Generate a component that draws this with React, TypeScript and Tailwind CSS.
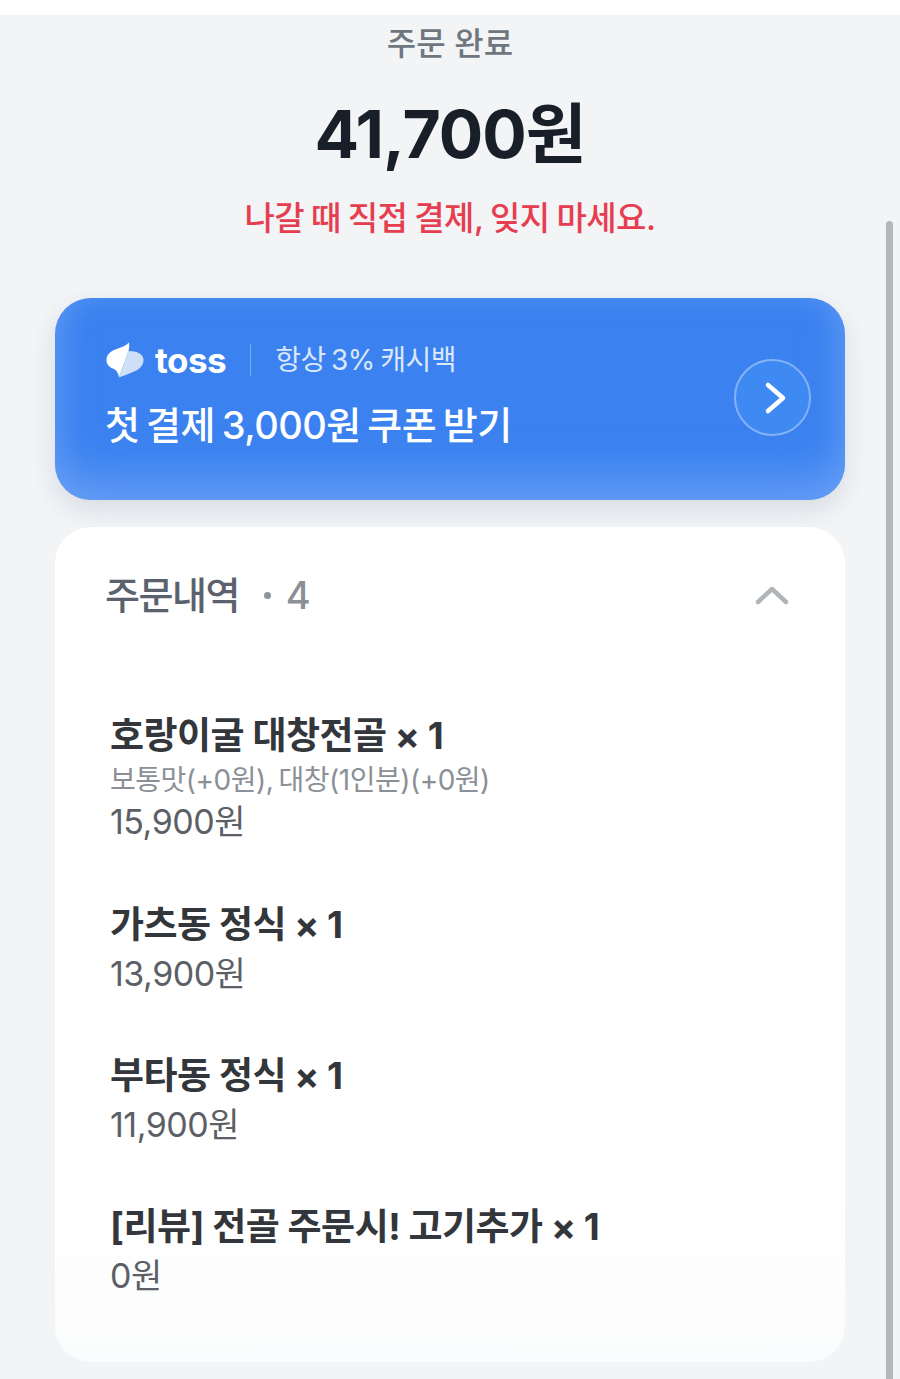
const font = "font-['Inter','Noto_Sans_CJK_KR',sans-serif]";

const items = [
  { name: "호랑이굴 대창전골 × 1", option: "보통맛(+0원), 대창(1인분)(+0원)", price: "15,900원" },
  { name: "가츠동 정식 × 1", price: "13,900원" },
  { name: "부타동 정식 × 1", price: "11,900원" },
  { name: "[리뷰] 전골 주문시! 고기추가 × 1", price: "0원" },
];

const TossLogo = () => (
  <svg width="38" height="36" viewBox="0 0 38 36" fill="none">
    <path d="M23 0.5C23.5 4 23 7 22.5 9L13 35.5C12 30 10 28 8 27C3 25.500 0.500 22 0.500 18C0.500 11 7 8 12 6.500C17 5 20 3.500 23 0.500Z" fill="#ffffff" />
    <path d="M22.500 9C31 9 37.500 12 37.500 18C37.500 24 33 27.500 27 30C22 32 17 34 13 35.500Z" fill="#cfdff8" />
  </svg>
);

export default function App() {
  return (
    <div className={`${font} relative h-[1379px] overflow-hidden bg-white`}>
      <div className="mt-[15px] h-[1364px] bg-[#f2f4f6] px-[55px]">
        <h1 className="pt-[8px] text-center text-[32px] leading-[42px] font-medium text-[#6f767e]">주문 완료</h1>
        <div className="mt-[25px] text-center text-[66px] leading-[88px] font-bold tracking-[-1px] text-[#191f28]">41,700원</div>
        <p className="mt-[17px] text-center text-[33px] leading-[46px] font-medium tracking-[-0.5px] [word-spacing:-1.5px] text-[#e63e50]">나갈 때 직접 결제, 잊지 마세요.</p>

        {/* TOSS BANNER */}
        <div className="mt-[57px] flex h-[202px] items-center justify-between rounded-[36px] bg-[#3b82f0] pr-[34px] pl-[51px] shadow-[0_10px_24px_rgba(60,80,120,0.14),inset_0_-24px_40px_rgba(130,178,250,0.5),inset_0_0_30px_rgba(120,170,250,0.25)]">
          <div className="pb-[9px]">
            <div className="flex items-center">
              <TossLogo />
              <span className="ml-[11px] text-[35px] leading-[40px] font-bold tracking-[-0.5px] text-white">toss</span>
              <span className="mr-[24px] ml-[24px] h-[32px] w-px bg-[#7fabf2]" />
              <span className="text-[28px] leading-[38px] tracking-[-0.5px] [word-spacing:-2px] text-[#dbe7fb]">항상 3% 캐시백</span>
            </div>
            <div className="mt-[20px] -ml-px text-[38px] leading-[50px] font-medium tracking-[-0.5px] [word-spacing:-3px] text-white">첫 결제 3,000원 쿠폰 받기</div>
          </div>
          <div className="mb-[3px] flex h-[77px] w-[77px] items-center justify-center rounded-full border-2 border-[#83b1f6] bg-[#3f8af2]">
            <svg width="24" height="34" viewBox="0 0 24 34" fill="none" className="ml-[4px]">
              <path d="M5 4L20 17L5 30" stroke="#ffffff" strokeWidth="4.500" strokeLinecap="round" strokeLinejoin="round" />
            </svg>
          </div>
        </div>

        {/* ORDER LIST */}
        <div className="mt-[27px] h-[835px] rounded-[36px] bg-linear-to-b from-white from-80% to-[#fbfcfd] pt-[42px] pr-[55px] pl-[50px]">
          <div className="flex items-center justify-between">
            <div className="flex items-center">
              <span className="text-[38px] leading-[52px] font-medium tracking-[-1.5px] text-[#5b626d]">주문내역</span>
              <span className="mr-[15px] ml-[25px] h-[7px] w-[7px] rounded-full bg-[#8b95a1]" />
              <span className="text-[38px] leading-[52px] font-medium text-[#8b9096]">4</span>
            </div>
            <svg width="36" height="24" viewBox="0 0 36 24" fill="none">
              <path d="M4 19L18 6L32 19" stroke="#b0b5ba" strokeWidth="4.500" strokeLinecap="round" strokeLinejoin="round" />
            </svg>
          </div>
          <div className="mt-[90px] flex flex-col gap-[54px] pl-[5px]">
            {items.map((item) => (
              <div key={item.name} className={item.option ? "mb-px" : ""}>
                <div className="text-[37px] leading-[50px] font-bold tracking-[-0.5px] text-[#33363b]">{item.name}</div>
                {item.option ? (
                  <div className="text-[28px] leading-[38px] tracking-[-0.5px] [word-spacing:-2px] text-[#8b9096]">{item.option}</div>
                ) : null}
                <div className={item.option ? "text-[34px] leading-[46px] tracking-[-0.5px] text-[#5c6066]" : "mt-px text-[34px] leading-[46px] tracking-[-0.5px] text-[#5c6066]"}>{item.price}</div>
              </div>
            ))}
          </div>
        </div>
      </div>

      {/* scrollbar */}
      <div className="absolute top-[221px] right-[7px] bottom-0 w-[7px] rounded-t-full bg-[#b4b6ba]" />
    </div>
  );
}
